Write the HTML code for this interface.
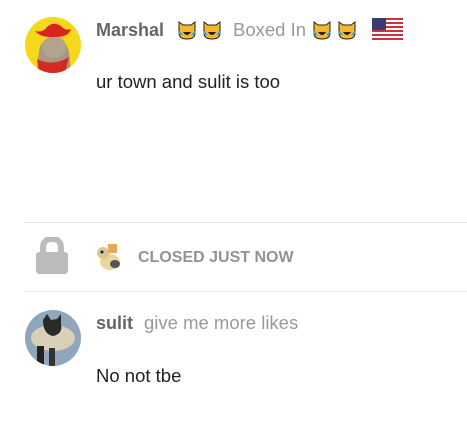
<!DOCTYPE html>
<html><head><meta charset="utf-8"><style>
body{margin:0;width:467px;height:444px;background:#fff;position:relative;overflow:hidden;font-family:"Liberation Sans",Arial,sans-serif}
.a{position:absolute}
.t{position:absolute;white-space:nowrap;line-height:1}
</style></head><body>
<svg class="a" style="left:25px;top:17px" width="56" height="56" viewBox="0 0 56 56">
<defs><clipPath id="c1"><circle cx="28" cy="28" r="28"/></clipPath></defs>
<g clip-path="url(#c1)">
<rect width="56" height="56" fill="#f5d81c"/>
<path d="M12 56 L14 34 Q16 22 28 20 Q40 22 44 34 L46 56Z" fill="#a89883"/>
<ellipse cx="29" cy="30" rx="12" ry="11" fill="#b4a48e"/>
<path d="M10 14 Q18 16 22 10 Q28 4 36 9 Q40 14 46 12 Q44 20 30 20 Q16 21 10 14Z" fill="#d8241d"/>
<path d="M12 42 Q28 50 44 40 L40 56 L14 56Z" fill="#d42a22"/>
</g></svg>
<div class="t" style="left:96px;top:21px;font-size:18px;font-weight:bold;color:#666">Marshal</div>
<svg class="a" style="left:178px;top:19px" width="48" height="22" viewBox="0 0 48 22">
<g id="cat"><path d="M1 3 L5 6 L13 6 L17 3 L17 14 Q17 20 9 20 Q1 20 1 14Z" fill="#f6b72a" stroke="#222" stroke-width="1"/><path d="M5 13 Q9 19 13 13Z" fill="#222"/><path d="M1 12 Q2 16 4 15" stroke="#3aa0e0" stroke-width="2" fill="none"/><path d="M17 12 Q16 16 14 15" stroke="#3aa0e0" stroke-width="2" fill="none"/></g>
<use href="#cat" x="25"/></svg>
<div class="t" style="left:233px;top:21px;font-size:18.5px;color:#999">Boxed In</div>
<svg class="a" style="left:313px;top:19px" width="48" height="22" viewBox="0 0 48 22"><use href="#cat"/><use href="#cat" x="25"/></svg>
<svg class="a" style="left:372px;top:18px" width="31" height="22" viewBox="0 0 31 22">
<rect width="31" height="22" fill="#fff"/>
<g fill="#c8353c"><rect y="0" width="31" height="2"/><rect y="4" width="31" height="2"/><rect y="8" width="31" height="2"/><rect y="12" width="31" height="2"/><rect y="16" width="31" height="2"/><rect y="20" width="31" height="2"/></g>
<rect width="14" height="12" fill="#3c3b6e"/></svg>
<div class="t" style="left:96px;top:73px;font-size:18.5px;color:#222">ur town and sulit is too</div>
<div class="a" style="left:24px;top:222px;width:443px;height:1px;background:#e6e6e6"></div>
<svg class="a" style="left:35px;top:237px" width="34" height="38" viewBox="0 0 34 38">
<path d="M8 16 V11 Q8 2 17 2 Q26 2 26 11 V16" stroke="#bbb" stroke-width="6" fill="none"/>
<rect x="1" y="15" width="32" height="22" rx="3" fill="#bbb"/></svg>
<svg class="a" style="left:94px;top:242px" width="30" height="32" viewBox="0 0 30 32">
<ellipse cx="16" cy="20" rx="10" ry="8" fill="#e8d79a"/><ellipse cx="9" cy="11" rx="6" ry="6" fill="#d8c890"/><rect x="14" y="2" width="9" height="9" fill="#e8a85a"/><circle cx="8" cy="10" r="1.5" fill="#222"/><ellipse cx="21" cy="22" rx="5" ry="4" fill="#555"/></svg>
<div class="t" style="left:138px;top:250px;font-size:16px;font-weight:bold;color:#929292">CLOSED JUST NOW</div>
<div class="a" style="left:25px;top:291px;width:442px;height:1px;background:#e6e6e6"></div>
<svg class="a" style="left:25px;top:310px" width="56" height="56" viewBox="0 0 56 56">
<defs><clipPath id="c2"><circle cx="28" cy="28" r="28"/></clipPath></defs>
<g clip-path="url(#c2)">
<rect width="56" height="56" fill="#8fa6bb"/>
<ellipse cx="28" cy="28" rx="22" ry="13" fill="#d8d0b8"/>
<rect x="12" y="36" width="7" height="20" fill="#222"/><rect x="24" y="38" width="6" height="18" fill="#333"/>
<path d="M18 10 L22 4 L26 10 L32 9 L36 4 L36 14 Q38 24 28 26 Q18 24 18 10Z" fill="#2a2a2a"/>
</g></svg>
<div class="t" style="left:96px;top:314px;font-size:18px;font-weight:bold;color:#666">sulit</div>
<div class="t" style="left:144px;top:314px;font-size:18.5px;color:#999">give me more likes</div>
<div class="t" style="left:96px;top:367px;font-size:18.5px;color:#222">No not tbe</div>
</body></html>
